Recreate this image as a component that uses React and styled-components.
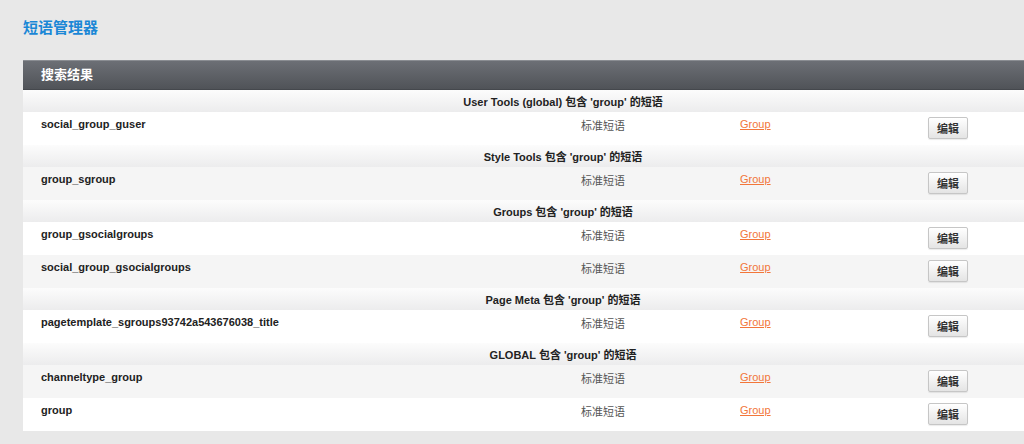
import styled, { createGlobalStyle } from "styled-components";

const GlobalStyle = createGlobalStyle`
  html, body {
    margin: 0;
    padding: 0;
    overflow: hidden;
    background: #e8e8e8;
  }
  body {
    font-family: "Liberation Sans", "Noto Sans CJK SC", sans-serif;
    font-size: 11px;
    color: #222;
  }
`;

const groups = [
  { title: "User Tools (global) 包含 'group' 的短语", items: ["social_group_guser"] },
  { title: "Style Tools 包含 'group' 的短语", items: ["group_sgroup"] },
  { title: "Groups 包含 'group' 的短语", items: ["group_gsocialgroups", "social_group_gsocialgroups"] },
  { title: "Page Meta 包含 'group' 的短语", items: ["pagetemplate_sgroups93742a543676038_title"] },
  { title: "GLOBAL 包含 'group' 的短语", items: ["channeltype_group", "group"] },
];

const App = () => {
  let rowIndex = 0;
  return (
    <Page>
      <GlobalStyle />
      <Title>短语管理器</Title>
      <Panel>
        <PanelHead>搜索结果</PanelHead>
        {groups.map((g) => (
          <div key={g.title}>
            <GroupHead>{g.title}</GroupHead>
            {g.items.map((name) => {
              const alt = rowIndex++ % 2 === 1;
              return (
                <Row key={name} $alt={alt}>
                  <Name>{name}</Name>
                  <Type>标准短语</Type>
                  <Product href="#">Group</Product>
                  <Action>
                    <EditButton type="button">编辑</EditButton>
                  </Action>
                </Row>
              );
            })}
          </div>
        ))}
      </Panel>
    </Page>
  );
};

const Page = styled.div`
  padding: 19px 0 0 23px;
  width: 1200px;
`;

const Title = styled.h1`
  margin: 0 0 23px;
  height: 18px;
  line-height: 18px;
  font-size: 15px;
  font-weight: bold;
  color: #1a87d6;
`;

const Panel = styled.div`
  width: 1084px;
  background: #fff;
`;

const PanelHead = styled.div`
  height: 28px;
  line-height: 28px;
  padding-left: 18px;
  border-top: 1px solid #8a8d92;
  border-bottom: 1px solid #45484d;
  background: linear-gradient(#6c6f75, #505358);
  color: #fff;
  font-size: 13px;
  font-weight: bold;
`;

const GroupHead = styled.div`
  height: 22px;
  line-height: 24px;
  padding-right: 4px;
  text-align: center;
  font-weight: bold;
  color: #222;
  background: linear-gradient(#fcfcfc, #ececed);
`;

const Row = styled.div`
  display: grid;
  grid-template-columns: 517px 126px 262px 1fr;
  height: 33px;
  background: ${({ $alt }) => ($alt ? "#f5f5f5" : "#fff")};
`;

const Name = styled.div`
  padding: 6px 0 0 18px;
  font-weight: bold;
  color: #222;
`;

const Type = styled.div`
  padding-top: 5px;
  text-align: center;
  color: #555;
`;

const Product = styled.a`
  justify-self: start;
  margin: 6px 0 0 74px;
  height: 13px;
  color: #f2763a;
  text-decoration: underline;
`;

const Action = styled.div`
  display: flex;
  align-items: center;
  padding-bottom: 1px;
`;

const EditButton = styled.button`
  width: 40px;
  height: 22px;
  padding: 0;
  border: 1px solid #c6c6c6;
  border-radius: 2px;
  background: linear-gradient(#ffffff, #e4e4e4);
  box-shadow: 0 1px 1px rgba(0, 0, 0, 0.08);
  font-family: "Liberation Sans", "Noto Sans CJK SC", sans-serif;
  font-size: 11px;
  font-weight: bold;
  color: #333;
  cursor: pointer;
`;

export default App;
